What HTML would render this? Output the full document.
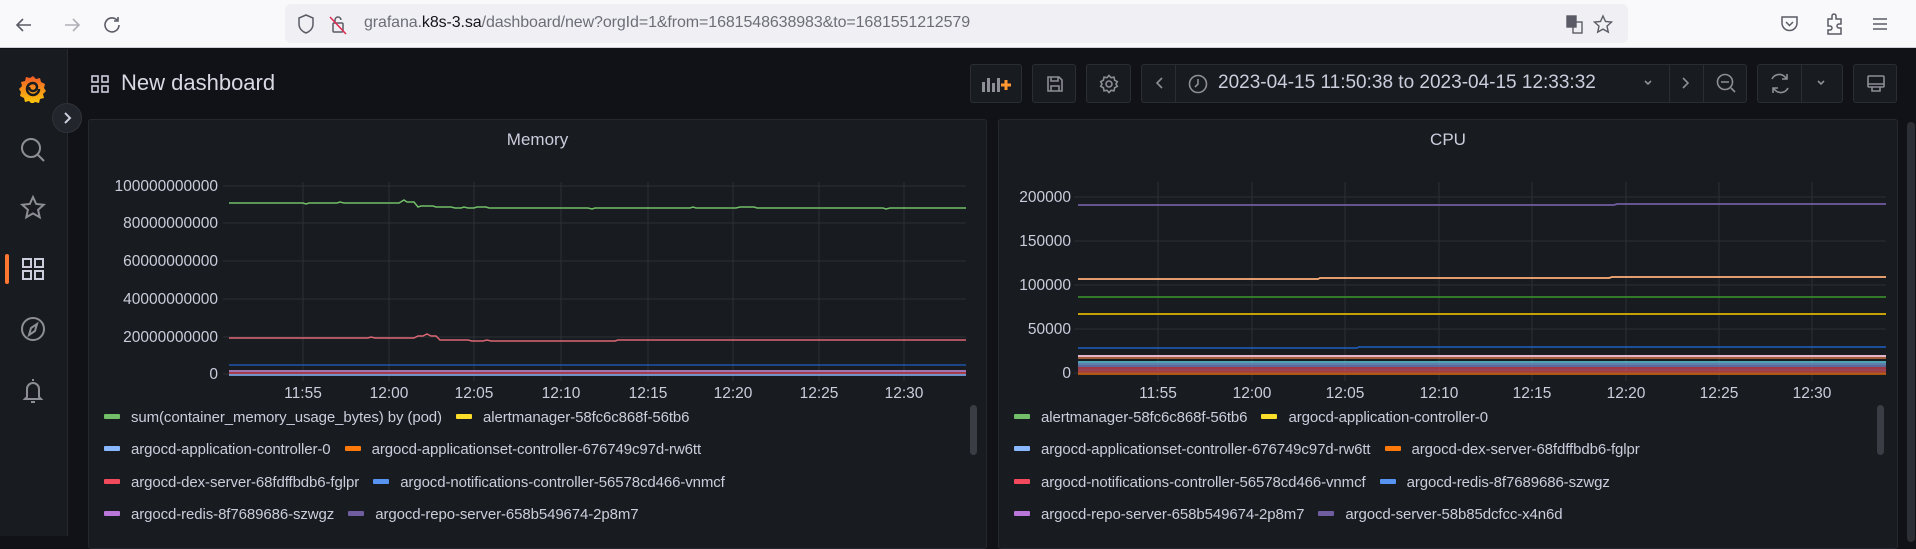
<!DOCTYPE html>
<html><head><meta charset="utf-8"><style>
*{margin:0;padding:0;box-sizing:border-box}
body{width:1916px;height:536px;overflow:hidden;background:#111217;font-family:"Liberation Sans",sans-serif;position:relative}
.abs{position:absolute}
.bb{position:absolute;top:0;left:0;width:1916px;height:48px;background:#f9f9fb;border-bottom:1px solid #cfcfd8}
.url{position:absolute;left:285px;top:4px;width:1343px;height:39px;background:#f0f0f4;border-radius:6px}
.btn{position:absolute;top:64px;height:39px;border:1px solid #2a2d33;border-radius:3px;background:#181b1f}
.panel{position:absolute;top:119px;height:430px;background:#181b1f;border:1px solid #25282e;border-radius:3px}
.ptitle{position:absolute;top:130px;color:#ccccdc;font-size:17px;text-align:center}
.leg{position:absolute;color:#ccccdc;font-size:15px;white-space:nowrap;letter-spacing:-0.1px}
.leg span.s{display:inline-block;width:16px;height:5px;border-radius:1px;vertical-align:middle;margin-right:11px;margin-top:-3px}
</style></head><body>
<div class="bb">
<svg class="abs" style="left:14px;top:14px" width="110" height="22" viewBox="0 0 110 22" fill="none" stroke="#5b5b66" stroke-width="1.6">
<path d="M17 11H3M9 5L3 11l6 6"/><path d="M51 11h14M59 5l6 6-6 6" stroke="#b0b0b8"/><path d="M103 6a7 7 0 1 0 2 5M104 3v4h-4"/></svg>
<div class="url">
<svg class="abs" style="left:12px;top:10px" width="60" height="22" fill="none" stroke="#5b5b66" stroke-width="1.5"><path d="M9 1l7 3v6c0 5-4 8-7 9-3-1-7-4-7-9V4z"/><rect x="36" y="9" width="10" height="9" rx="1"/><path d="M38 9V6a3 3 0 0 1 6 0"/><path d="M33 3l16 17" stroke="#e22850"/></svg>
<div class="abs" style="left:79px;top:10px;font-size:16px;color:#6d6d78;letter-spacing:-0.1px">grafana.<span style="color:#15141a">k8s-3.sa</span>/dashboard/new?orgId=1&amp;from=1681548638983&amp;to=1681551212579</div>
<svg class="abs" style="left:1280px;top:10px" width="50" height="22" fill="none" stroke="#5b5b66" stroke-width="1.4"><rect x="2" y="2" width="9" height="11" fill="#5b5b66"/><rect x="8" y="8" width="9" height="11"/><path d="M38 2l2.5 5.5 6 .6-4.5 4 1.3 6-5.3-3-5.3 3 1.3-6-4.5-4 6-.6z"/></svg>
</div>
<svg class="abs" style="left:1780px;top:13px" width="130" height="24" fill="none" stroke="#5b5b66" stroke-width="1.5"><path d="M2 4h15v6a7.5 7.5 0 0 1-15 0z"/><path d="M6 9l3.5 3.5L13 9"/><path d="M48 6h4V3a2 2 0 0 1 4 0v3h5v5h-2a2 2 0 0 0 0 4h2v6H48v-4h2a2 2 0 0 0 0-4h-2z"/><path d="M93 6h14M93 11h14M93 16h14"/></svg>
</div>
<!-- sidebar -->
<div class="abs" style="left:0;top:49px;width:68px;height:487px;background:#181b1f;border-right:1px solid #25282e"></div>
<svg class="abs" style="left:18px;top:73px" width="30" height="30" viewBox="0 0 30 30"><defs><linearGradient id="gg" x1="0" y1="1" x2="0" y2="0"><stop offset="0" stop-color="#fbca0a"/><stop offset="1" stop-color="#f05a28"/></linearGradient></defs><path d="M15 3l3 3 4-1 1 4 4 2-1 4 2 3-3 3 1 4-4 1-1 4-4-1-3 2-3-3-4 1-1-4-4-2 1-4-2-3 3-3-1-4 4-1 1-4 4 1z" fill="url(#gg)"/><path d="M21 16a6 6 0 1 1-6-6 4 4 0 1 1-4 4" fill="none" stroke="#181b1f" stroke-width="2.5"/></svg>
<div class="abs" style="left:52px;top:103px;width:30px;height:30px;border-radius:50%;background:#22252b;border:1px solid #2f3238"></div>
<svg class="abs" style="left:60px;top:111px" width="14" height="14" fill="none" stroke="#ccccdc" stroke-width="2"><path d="M5 2l5 5-5 5"/></svg>
<svg class="abs" style="left:18px;top:135px" width="30" height="270" fill="none" stroke="#8e8e97" stroke-width="2">
<circle cx="13" cy="13" r="9"/><path d="M20 20l6 6"/>
<path d="M15 62l3.2 7 7.5.8-5.6 5 1.6 7.5-6.7-3.9-6.7 3.9 1.6-7.5-5.6-5 7.5-.8z"/>
<g stroke="#ccccdc"><rect x="5" y="124" width="8" height="8"/><rect x="17" y="124" width="8" height="8"/><rect x="5" y="136" width="8" height="8"/><rect x="17" y="136" width="8" height="8"/></g>
<circle cx="15" cy="194" r="11"/><path d="M19 189l-2 7-6 4 2-7z"/>
<path d="M9 262v-8a6 6 0 0 1 12 0v8l2 2H7zM13 267h4M15 246v-2"/>
</svg>
<div class="abs" style="left:5px;top:254px;width:4px;height:30px;background:#ff7731;border-radius:2px"></div>
<!-- header -->
<svg class="abs" style="left:90px;top:74px" width="20" height="20" fill="none" stroke="#ccccdc" stroke-width="1.6"><rect x="2" y="2" width="6" height="6"/><rect x="12" y="2" width="6" height="6"/><rect x="2" y="12" width="6" height="6"/><rect x="12" y="12" width="6" height="6"/></svg>
<div class="abs" style="left:121px;top:70px;font-size:22px;color:#d8d9e3">New dashboard</div>
<div class="btn" style="left:970px;width:52px"><svg class="abs" style="left:10px;top:9px" width="32" height="20"><rect x="1" y="8" width="3" height="10" fill="#8e8e97"/><rect x="6" y="4" width="3" height="14" fill="#8e8e97"/><rect x="11" y="9" width="3" height="9" fill="#8e8e97"/><rect x="16" y="4" width="3" height="14" fill="#8e8e97"/><path d="M20 11h10M25 6v10" stroke="#ff9830" stroke-width="3"/></svg></div>
<div class="btn" style="left:1032px;width:44px"><svg class="abs" style="left:13px;top:10px" width="18" height="18" fill="none" stroke="#8e8e97" stroke-width="1.6"><path d="M2 2h11l3 3v11H2z"/><path d="M5 2v4h7V2M5 16v-5h8v5"/></svg></div>
<div class="btn" style="left:1086px;width:45px"><svg class="abs" style="left:12px;top:9px" width="20" height="20" fill="none" stroke="#8e8e97" stroke-width="1.6"><circle cx="10" cy="10" r="3"/><path d="M10 1.5l2 2.2 3-.5.6 3 2.7 1.5-1.3 2.3 1.3 2.3-2.7 1.5-.6 3-3-.5-2 2.2-2-2.2-3 .5-.6-3L1.7 12.3 3 10 1.7 7.7l2.7-1.5.6-3 3 .5z"/></svg></div>
<div class="btn" style="left:1141px;width:606px">
<div class="abs" style="left:33px;top:0;width:1px;height:37px;background:#2a2d33"></div>
<div class="abs" style="left:527px;top:0;width:1px;height:37px;background:#2a2d33"></div>
<div class="abs" style="left:561px;top:0;width:1px;height:37px;background:#2a2d33"></div>
<svg class="abs" style="left:0;top:0" width="606" height="37" fill="none" stroke="#8e8e97" stroke-width="1.6"><path d="M20 13l-5 5 5 5"/><circle cx="56" cy="19" r="8.5"/><path d="M56 14v5l-3 3"/><path d="M503 16l3 3 3-3M541 13l5 5-5 5"/><circle cx="583" cy="17" r="7.5"/><path d="M579 17h8M589 23l4 4"/></svg>
<div class="abs" style="left:76px;top:7px;font-size:19px;color:#ccccdc;white-space:nowrap">2023-04-15 11:50:38 to 2023-04-15 12:33:32</div>
</div>
<div class="btn" style="left:1757px;width:86px"><div class="abs" style="left:43px;top:0;width:1px;height:37px;background:#2a2d33"></div>
<svg class="abs" style="left:0;top:0" width="86" height="37" fill="none" stroke="#8e8e97" stroke-width="1.6"><path d="M14 14a8 8 0 0 1 13-2l2 2M30 23a8 8 0 0 1-13 2l-2-2M29 9v5h-5M15 28v-5h5"/><path d="M60 16l3 3 3-3"/></svg></div>
<div class="btn" style="left:1853px;width:44px"><svg class="abs" style="left:12px;top:9px" width="20" height="20" fill="none" stroke="#8e8e97" stroke-width="1.6"><rect x="2" y="2" width="16" height="11" rx="1"/><path d="M2 10h16M6 13v4h8v-4"/></svg></div>
<!-- panels -->
<div class="panel" style="left:88px;width:899px"></div>
<div class="panel" style="left:998px;width:900px"></div>
<div class="abs" style="left:1907px;top:122px;width:8px;height:420px;background:#2c2f35;border-radius:4px"></div>
<div class="ptitle" style="left:88px;width:899px">Memory</div>
<div class="ptitle" style="left:998px;width:900px">CPU</div>
<!-- memory chart -->
<svg class="abs" style="left:88px;top:119px" width="899" height="300" font-family="Liberation Sans, sans-serif" font-size="15.5" fill="#ccccdc">
<g stroke="#2c2f35" stroke-width="1">
<path d="M135 67H878M135 104H878M135 142H878M135 180H878M135 218H878M135 255H878"/>
<path d="M215 63V262M301 63V262M386 63V262M473 63V262M560 63V262M645 63V262M731 63V262M816 63V262"/></g>
<g text-anchor="end"><text x="130" y="72">100000000000</text><text x="130" y="109">80000000000</text><text x="130" y="147">60000000000</text><text x="130" y="185">40000000000</text><text x="130" y="223">20000000000</text><text x="130" y="260">0</text></g>
<g text-anchor="middle"><text x="215" y="279">11:55</text><text x="301" y="279">12:00</text><text x="386" y="279">12:05</text><text x="473" y="279">12:10</text><text x="560" y="279">12:15</text><text x="645" y="279">12:20</text><text x="731" y="279">12:25</text><text x="816" y="279">12:30</text></g>
<path d="M141 84H215L218 85 221 84H249L252 83 256 84H311L316 81 319 83H326L330 88 333 87H345L348 88H363L367 89H373L376 88 380 89H386L389 88H398L401 89H500L504 90 507 89H602L605 88 608 89H648L652 88H666L669 89H795L798 90 802 89H878" fill="none" stroke="#73bf69" stroke-width="1.5"/>
<path d="M141 219H280L283 218 287 219H326L330 217H335L339 215 343 217H348L352 221H380L384 222H395L399 221 403 222H527L530 221H878" fill="none" stroke="#ff7383" stroke-opacity=".85" stroke-width="1.5"/>
<path d="M141 246H878" stroke="#1f60c4" stroke-width="1.3"/>
<path d="M141 252H878" stroke="#ca95e5" stroke-width="1.5"/>
<path d="M141 254H878" stroke="#f2495c" stroke-width="1.2"/>
<path d="M141 256H878" stroke="#8ab8ff" stroke-width="1.5"/>
</svg>
<div class="abs" style="left:970px;top:405px;width:7px;height:50px;background:#3a3d44;border-radius:4px"></div>
<div class="leg" style="left:104px;top:409px"><span class="s" style="background:#73bf69"></span>sum(container_memory_usage_bytes) by (pod) <span class="s" style="background:#fade2a;margin-left:10px"></span>alertmanager-58fc6c868f-56tb6</div>
<div class="leg" style="left:104px;top:441px"><span class="s" style="background:#8ab8ff"></span>argocd-application-controller-0 <span class="s" style="background:#ff780a;margin-left:10px"></span>argocd-applicationset-controller-676749c97d-rw6tt</div>
<div class="leg" style="left:104px;top:474px"><span class="s" style="background:#f2495c"></span>argocd-dex-server-68fdffbdb6-fglpr <span class="s" style="background:#5794f2;margin-left:10px"></span>argocd-notifications-controller-56578cd466-vnmcf</div>
<div class="leg" style="left:104px;top:506px"><span class="s" style="background:#b877d9"></span>argocd-redis-8f7689686-szwgz <span class="s" style="background:#705da0;margin-left:10px"></span>argocd-repo-server-658b549674-2p8m7</div>
<!-- cpu chart -->
<svg class="abs" style="left:998px;top:119px" width="900" height="300" font-family="Liberation Sans, sans-serif" font-size="15.5" fill="#ccccdc">
<g stroke="#2c2f35" stroke-width="1">
<path d="M76 78H888M76 122H888M76 166H888M76 210H888M76 254H888"/>
<path d="M160 63V262M254 63V262M347 63V262M441 63V262M534 63V262M628 63V262M721 63V262M814 63V262"/></g>
<g text-anchor="end"><text x="73" y="83">200000</text><text x="73" y="127">150000</text><text x="73" y="171">100000</text><text x="73" y="215">50000</text><text x="73" y="259">0</text></g>
<g text-anchor="middle"><text x="160" y="279">11:55</text><text x="254" y="279">12:00</text><text x="347" y="279">12:05</text><text x="441" y="279">12:10</text><text x="534" y="279">12:15</text><text x="628" y="279">12:20</text><text x="721" y="279">12:25</text><text x="814" y="279">12:30</text></g>
<path d="M80 86H616l3-1H888" fill="none" stroke="#705da0" stroke-width="1.8"/>
<path d="M80 160H320l2-1H611l3-1H888" fill="none" stroke="#ffb07a" stroke-width="1.8"/>
<path d="M80 178H888" stroke="#37872d" stroke-width="1.8"/>
<path d="M80 195H888" stroke="#e0b400" stroke-width="1.8"/>
<path d="M80 229H359l2-1H888" fill="none" stroke="#1f60c4" stroke-width="1.5"/>
<path d="M80 237H888" stroke="#ffcce0" stroke-width="1.8"/>
<path d="M80 239H888" stroke="#f2844b" stroke-width="1.2"/>
<path d="M80 243H888" stroke="#5fcfe6" stroke-width="1.5"/>
<path d="M80 245H888" stroke="#8ab8ff" stroke-width="1.2"/>
<path d="M80 247H888" stroke="#7084c4" stroke-width="1.5"/>
<path d="M80 249H888" stroke="#f2495c" stroke-width="1.2"/>
<path d="M80 251H888" stroke="#c4516a" stroke-width="1.5"/>
<path d="M80 253H888" stroke="#d44a3a" stroke-width="1.5"/>
<path d="M80 255H888" stroke="#ff780a" stroke-width="1.2"/>
</svg>
<div class="abs" style="left:1877px;top:405px;width:7px;height:50px;background:#3a3d44;border-radius:4px"></div>
<div class="leg" style="left:1014px;top:409px"><span class="s" style="background:#73bf69"></span>alertmanager-58fc6c868f-56tb6 <span class="s" style="background:#fade2a;margin-left:10px"></span>argocd-application-controller-0</div>
<div class="leg" style="left:1014px;top:441px"><span class="s" style="background:#8ab8ff"></span>argocd-applicationset-controller-676749c97d-rw6tt <span class="s" style="background:#ff780a;margin-left:10px"></span>argocd-dex-server-68fdffbdb6-fglpr</div>
<div class="leg" style="left:1014px;top:474px"><span class="s" style="background:#f2495c"></span>argocd-notifications-controller-56578cd466-vnmcf <span class="s" style="background:#5794f2;margin-left:10px"></span>argocd-redis-8f7689686-szwgz</div>
<div class="leg" style="left:1014px;top:506px"><span class="s" style="background:#b877d9"></span>argocd-repo-server-658b549674-2p8m7 <span class="s" style="background:#705da0;margin-left:10px"></span>argocd-server-58b85dcfcc-x4n6d</div>
</body></html>
